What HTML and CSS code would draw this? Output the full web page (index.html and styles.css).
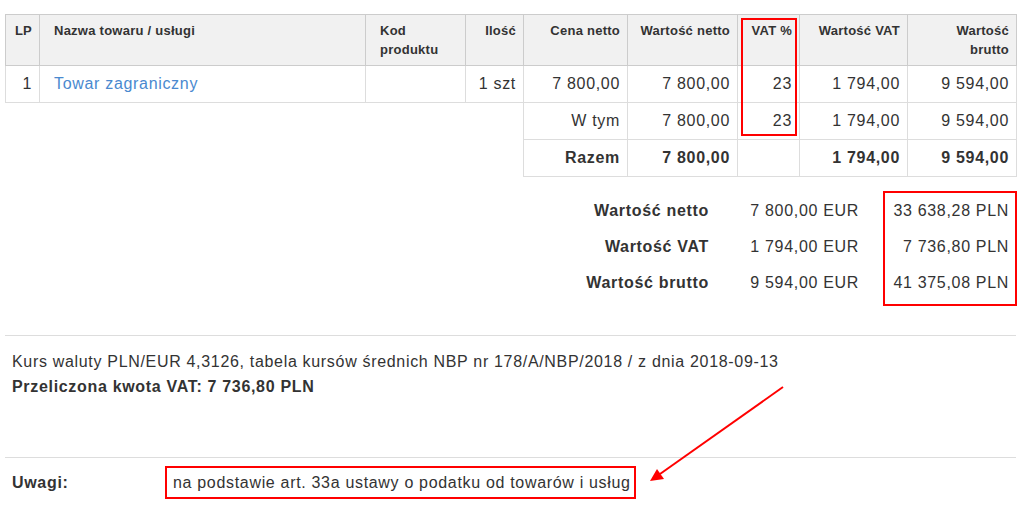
FILE: index.html
```html
<!DOCTYPE html>
<html lang="pl">
<head>
<meta charset="utf-8">
<title>Faktura</title>
<link rel="stylesheet" href="styles.css">
</head>
<body>
<div class="page">
  <div class="items-wrap">
    <table class="items">
      <colgroup>
        <col class="c-lp"><col class="c-name"><col class="c-code"><col class="c-qty"><col class="c-price"><col class="c-net"><col class="c-vat"><col class="c-vatval"><col class="c-gross">
      </colgroup>
      <thead>
        <tr>
          <th class="r">LP</th>
          <th class="l">Nazwa towaru / usługi</th>
          <th class="l">Kod produktu</th>
          <th class="r">Ilość</th>
          <th class="r">Cena netto</th>
          <th class="r">Wartość netto</th>
          <th class="r">VAT %</th>
          <th class="r">Wartość VAT</th>
          <th class="r">Wartość brutto</th>
        </tr>
      </thead>
      <tbody>
        <tr>
          <td class="r">1</td>
          <td class="l"><a class="item-link" href="#">Towar zagraniczny</a></td>
          <td class="l"></td>
          <td class="r">1 szt</td>
          <td class="r">7 800,00</td>
          <td class="r">7 800,00</td>
          <td class="r">23</td>
          <td class="r">1 794,00</td>
          <td class="r">9 594,00</td>
        </tr>
        <tr>
          <td class="blank" colspan="4"></td>
          <td class="r">W tym</td>
          <td class="r">7 800,00</td>
          <td class="r">23</td>
          <td class="r">1 794,00</td>
          <td class="r">9 594,00</td>
        </tr>
        <tr class="total">
          <td class="blank" colspan="4"></td>
          <td class="r">Razem</td>
          <td class="r">7 800,00</td>
          <td class="r"></td>
          <td class="r">1 794,00</td>
          <td class="r">9 594,00</td>
        </tr>
      </tbody>
    </table>
    <div class="vat-mark"></div>
  </div>

  <div class="summary">
    <div class="sum-col sum-labels">
      <div class="sum-cell">Wartość netto</div>
      <div class="sum-cell">Wartość VAT</div>
      <div class="sum-cell">Wartość brutto</div>
    </div>
    <div class="sum-col sum-eur">
      <div class="sum-cell">7 800,00 EUR</div>
      <div class="sum-cell">1 794,00 EUR</div>
      <div class="sum-cell">9 594,00 EUR</div>
    </div>
    <div class="sum-col sum-pln">
      <div class="sum-cell">33 638,28 PLN</div>
      <div class="sum-cell">7 736,80 PLN</div>
      <div class="sum-cell">41 375,08 PLN</div>
    </div>
  </div>

  <div class="rate">
    <div>Kurs waluty PLN/EUR 4,3126, tabela kursów średnich NBP nr 178/A/NBP/2018 / z dnia 2018-09-13</div>
    <div class="rate-vat">Przeliczona kwota VAT: 7 736,80 PLN</div>
  </div>

  <div class="notes">
    <div class="notes-label">Uwagi:</div>
    <div class="notes-text">na podstawie art. 33a ustawy o podatku od towarów i usług</div>
  </div>

  <svg class="arrow" width="1022" height="507" viewBox="0 0 1022 507">
    <line x1="783" y1="387" x2="660" y2="474" stroke="#f00" stroke-width="2"/>
    <polygon points="650,481 657,469 664,479" fill="#f00"/>
  </svg>
</div>
</body>
</html>
```

FILE: styles.css
```css
* { box-sizing: border-box; }
html, body { margin: 0; padding: 0; background: #fff; }
body {
  font-family: "Liberation Sans", Arial, sans-serif;
  color: #333;
  font-size: 16px;
  letter-spacing: 0.68px;
}
.page {
  position: relative;
  width: 1022px;
  height: 507px;
  padding: 14px 6px 0 5px;
  overflow: hidden;
}
.items-wrap { position: relative; }
.items {
  width: 1011px;
  border-collapse: collapse;
  table-layout: fixed;
}
.c-lp { width: 34px; }
.c-name { width: 326px; }
.c-code { width: 100px; }
.c-qty { width: 58px; }
.c-price { width: 104px; }
.c-net { width: 110px; }
.c-vat { width: 62px; }
.c-vatval { width: 108px; }
.c-gross { width: 109px; }

.items th {
  background: #f1f1f1;
  border: 1px solid #ccc;
  font-size: 13px;
  font-weight: bold;
  letter-spacing: 0.25px;
  line-height: 18.5px;
  padding: 7px 7px 6px 8px;
  vertical-align: top;
  height: 51px;
}
.items td {
  border: 1px solid #ddd;
  font-size: 16px;
  line-height: 20px;
  padding: 8px 7px 8px 8px;
  height: 37px;
  vertical-align: top;
}
.items .l { text-align: left; padding-left: 14px; }
.items .r { text-align: right; }
.items td.blank { border: none; }
.items .total td { font-weight: bold; }
.items .total td.blank { font-weight: normal; }
.item-link { color: #4a89cf; text-decoration: none; }

.vat-mark {
  position: absolute;
  left: 736px;
  top: 4px;
  width: 56px;
  height: 118px;
  border: 2px solid #f00;
}

.summary {
  display: flex;
  justify-content: flex-end;
  margin-top: 14px;
}
.sum-col { display: flex; flex-direction: column; }
.sum-cell { height: 36px; line-height: 36px; text-align: right; white-space: nowrap; }
.sum-labels { font-weight: bold; padding-top: 2px; }
.sum-eur { width: 150px; margin-right: 24px; padding-top: 2px; }
.sum-pln {
  width: 134px;
  border: 2px solid #f00;
  padding: 0 6px 3px 0;
  margin-right: -1px;
}

.rate {
  margin-top: 29px;
  border-top: 1px solid #ddd;
  padding: 13px 0 0 7px;
  line-height: 25px;
  height: 122px;
}
.rate-vat { font-weight: bold; }

.notes {
  border-top: 1px solid #ddd;
  display: flex;
  align-items: flex-start;
  padding: 8px 0 0 7px;
}
.notes-label {
  width: 153px;
  font-weight: bold;
  line-height: 33px;
}
.notes-text {
  border: 2px solid #f00;
  line-height: 29px;
  padding: 0 3px 0 6px;
}

.arrow {
  position: absolute;
  left: 0;
  top: 0;
  pointer-events: none;
}
```
